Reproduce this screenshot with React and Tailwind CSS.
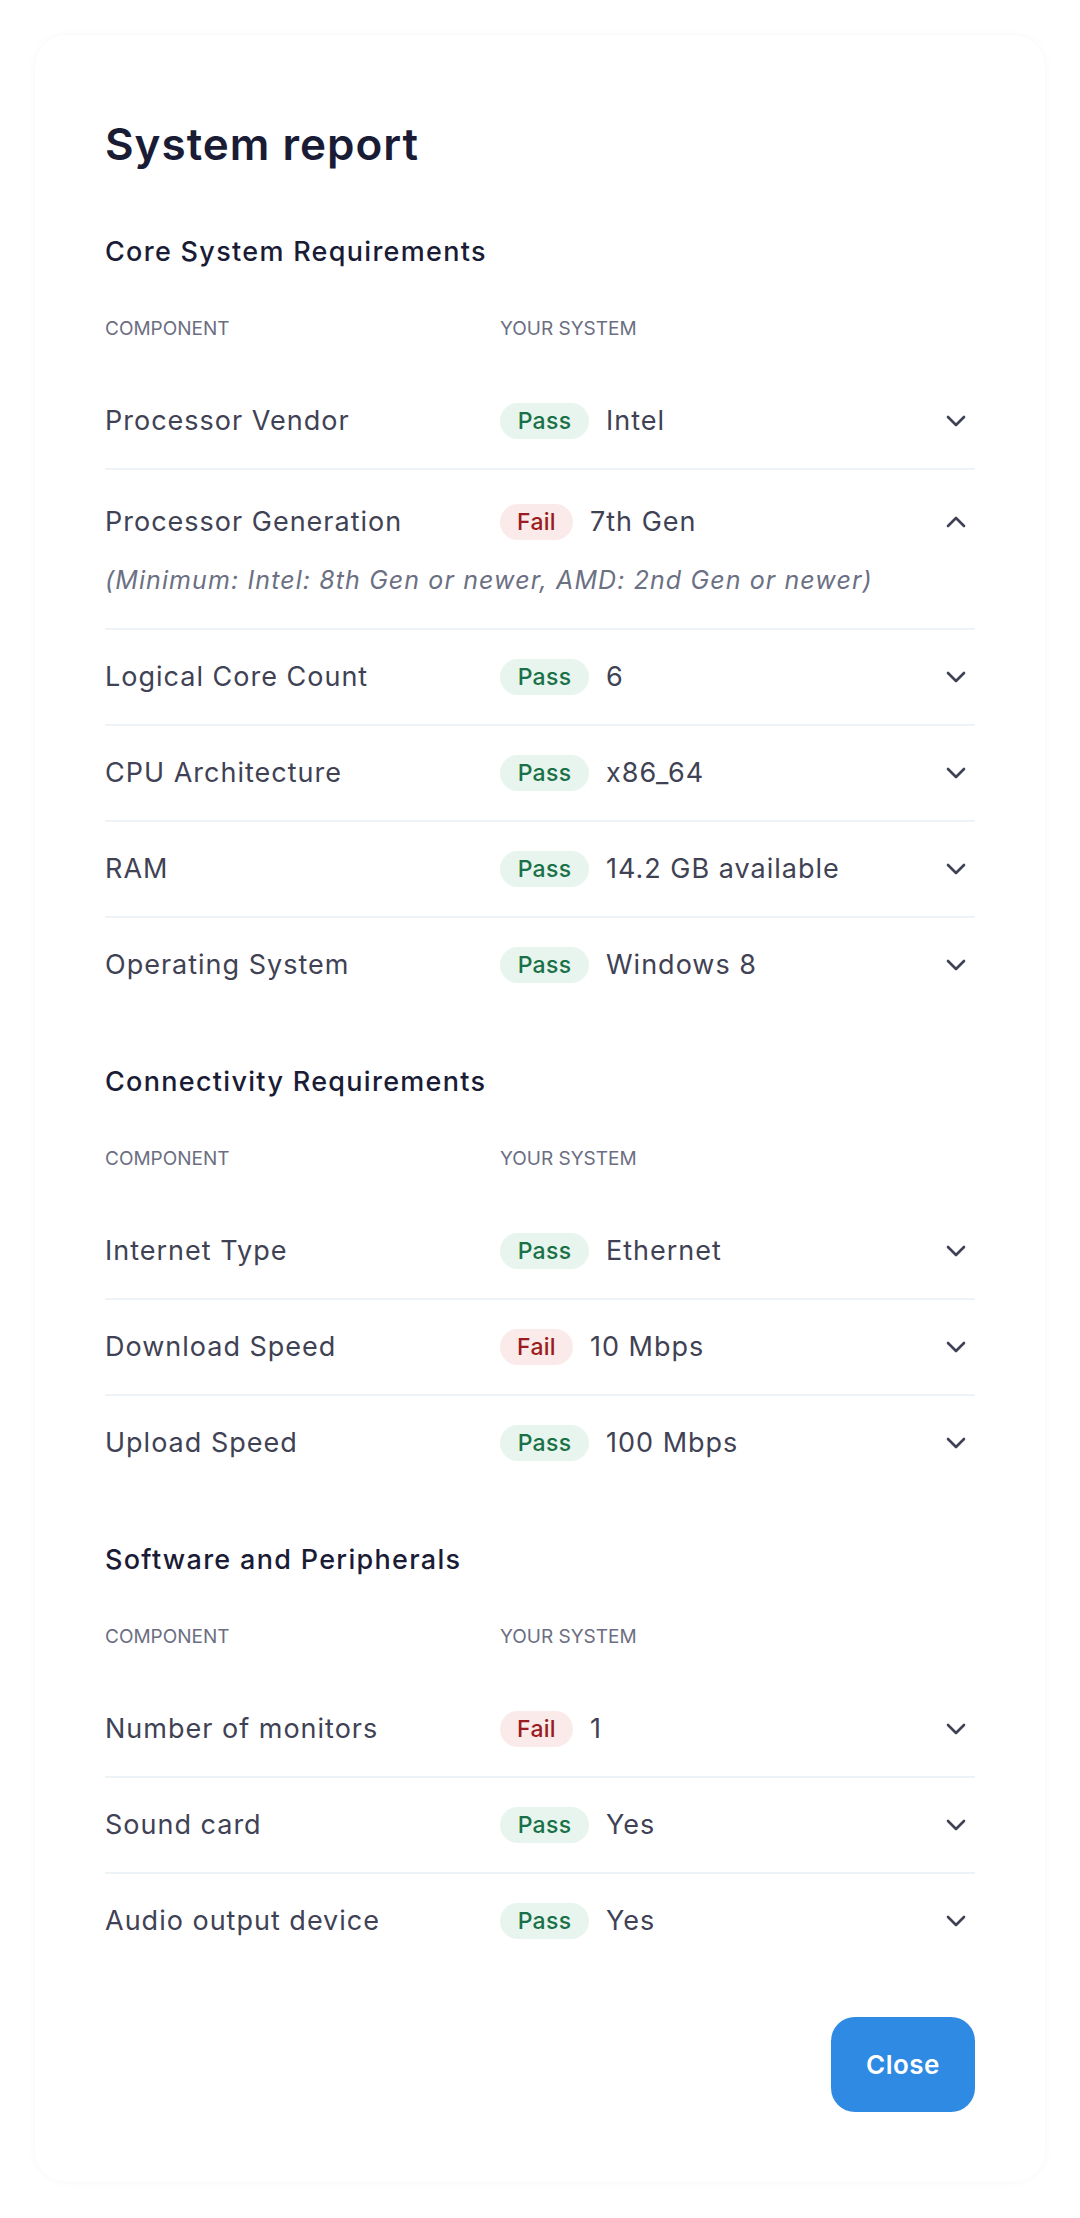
import React from 'react';
import clsx from 'clsx';

const sections = [
    {
        title: 'Core System Requirements',
        rows: [
            { label: 'Processor Vendor', pass: true, value: 'Intel' },
            {
                label: 'Processor Generation',
                pass: false,
                value: '7th Gen',
                note: '(Minimum: Intel: 8th Gen or newer, AMD: 2nd Gen or newer)',
            },
            { label: 'Logical Core Count', pass: true, value: '6' },
            { label: 'CPU Architecture', pass: true, value: 'x86_64' },
            { label: 'RAM', pass: true, value: '14.2 GB available' },
            { label: 'Operating System', pass: true, value: 'Windows 8' },
        ],
    },
    {
        title: 'Connectivity Requirements',
        rows: [
            { label: 'Internet Type', pass: true, value: 'Ethernet' },
            { label: 'Download Speed', pass: false, value: '10 Mbps' },
            { label: 'Upload Speed', pass: true, value: '100 Mbps' },
        ],
    },
    {
        title: 'Software and Peripherals',
        rows: [
            { label: 'Number of monitors', pass: false, value: '1' },
            { label: 'Sound card', pass: true, value: 'Yes' },
            { label: 'Audio output device', pass: true, value: 'Yes' },
        ],
    },
];

const Chevron = ({ up }) => (
    <svg width="20" height="12" viewBox="0 0 20 12" fill="none" className="text-[#3f4254]">
        <path
            d={up ? 'M2 10L10 2L18 10' : 'M2 2L10 10L18 2'}
            stroke="currentColor"
            strokeWidth="2.6"
            strokeLinecap="round"
            strokeLinejoin="round"
        />
    </svg>
);

const StatusPill = ({ pass }) => (
    <span
        className={clsx(
            'inline-flex h-9 items-center rounded-full text-[23px] font-medium tracking-[0.3px]',
            pass ? 'w-[89px] justify-center bg-[#e7f5ee] text-[#1a7147]' : 'w-[73px] justify-center bg-[#fbeaea] text-[#9a1c20]'
        )}
    >
        {pass ? 'Pass' : 'Fail'}
    </span>
);

const Row = ({ row, last }) => (
    <div
        className={clsx(
            !last && 'border-b-2 border-[#eef3f8]',
            row.note ? 'pt-[34px] pb-[32px]' : 'py-[29px]'
        )}
    >
        <div className="flex h-9 items-center">
            <div className="w-[395px] text-[27px] leading-9 tracking-[1px] text-[#3f4254]">{row.label}</div>
            <div className="flex flex-1 items-center gap-[17px]">
                <StatusPill pass={row.pass} />
                <span className="text-[27px] leading-9 tracking-[1px] text-[#3f4254]">{row.value}</span>
            </div>
            <div className="flex w-[38px] justify-center">
                <Chevron up={!!row.note} />
            </div>
        </div>
        {row.note && (
            <p className="mt-[24px] text-[25px] italic leading-8 tracking-[1.1px] text-[#6b7083]">{row.note}</p>
        )}
    </div>
);

const Section = ({ section, first }) => (
    <section className={first ? 'mt-[63px]' : 'mt-[52px]'}>
        <h2 className="text-[27px] font-medium leading-9 tracking-[1.3px] text-[#1a1c36]">{section.title}</h2>
        <div className="mt-[47px] flex text-[19px] uppercase leading-6 text-[#6b6e82]">
            <div className="w-[395px]">Component</div>
            <div>Your system</div>
        </div>
        <div className="mt-[33px]">
            {section.rows.map((row, i) => (
                <Row key={row.label} row={row} last={i === section.rows.length - 1} />
            ))}
        </div>
    </section>
);

const App = () => {
    return (
        <div className="min-h-screen bg-white px-[35px] pt-[35px] pb-[35px] font-['Inter',sans-serif]">
            <div className="rounded-[32px] bg-white px-[70px] pt-[82px] pb-[70px] shadow-[0_0_10px_rgba(15,23,42,0.035)]">
                <h1 className="text-[44px] font-semibold leading-[54px] tracking-[1px] text-[#1a1c36]">System report</h1>

                {sections.map((section, i) => (
                    <Section key={section.title} section={section} first={i === 0} />
                ))}

                <div className="mt-[49px] flex justify-end">
                    <button className="h-[95px] w-[144px] rounded-[24px] bg-[#2f8ae4] text-[26px] font-semibold tracking-[0.5px] text-white">
                        Close
                    </button>
                </div>
            </div>
        </div>
    );
};

export default App;
